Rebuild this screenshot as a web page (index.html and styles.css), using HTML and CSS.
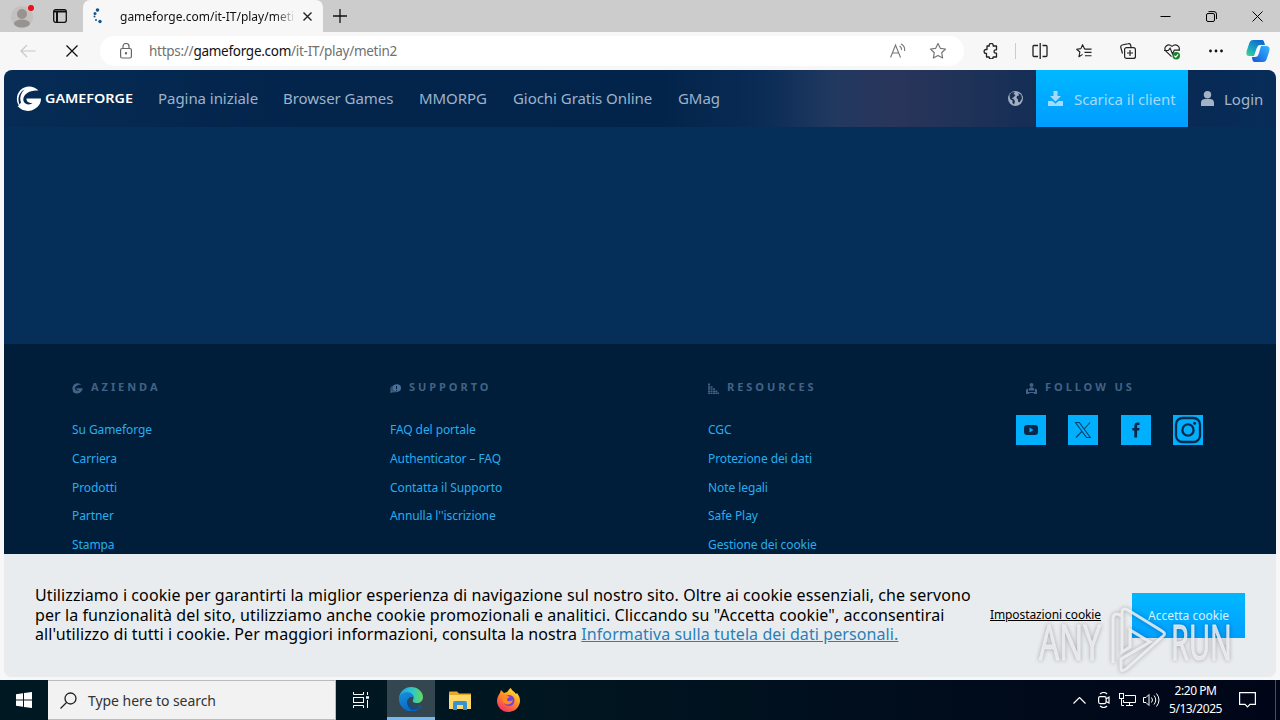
FILE: index.html
```html
<!DOCTYPE html>
<html lang="it">

<head>
  <meta charset="UTF-8">
  <meta name="viewport" content="width=device-width, initial-scale=1.0">
  <title>gameforge.com/it-IT/play/metin2</title>
  <link rel="stylesheet" href="styles.css">
</head>

<body>
  <div class="tab-strip">
    <svg class="profile" width="24" height="26" viewBox="0 0 24 26">
      <circle cx="11" cy="14" r="11" fill="#c3c0be"/>
      <circle cx="11" cy="11" r="5" fill="#969390"/>
      <ellipse cx="11" cy="20.500" rx="8" ry="4" fill="#969390"/>
      <circle cx="20" cy="5" r="3" fill="#e8121d"/>
    </svg>
    <svg class="tab-actions" width="14" height="14" viewBox="0 0 14 14" fill="none" stroke="#111" stroke-width="1.300">
      <rect x=".7" y=".7" width="12.600" height="12.600" rx="2"/>
      <path d="M1 2.500h12M4 3v10" stroke-width="2"/>
    </svg>
    <div class="tab">
      <svg width="14" height="18" viewBox="0 0 14 18" fill="#14558c">
        <circle cx="5.500" cy="3" r="1.800"/><circle cx="3" cy="6.500" r="1.500"/><circle cx="2.500" cy="9.500" r="1"/>
        <circle cx="4" cy="13" r="1"/><circle cx="8" cy="14.500" r="1.700"/>
      </svg>
      <span class="tab-title">gameforge.com/it-IT/play/metin2</span>
      <svg class="tab-close" width="9" height="9" viewBox="0 0 9 9" stroke="#222" stroke-width="1.400"><path d="M.5.5l8 8M8.500.5l-8 8"/></svg>
    </div>
    <svg class="new-tab" width="14" height="14" viewBox="0 0 14 14" stroke="#111" stroke-width="1.300"><path d="M7 0v14M0 7h14"/></svg>
    <div class="window-buttons">
      <svg width="11" height="11" viewBox="0 0 11 11" stroke="#000"><path d="M.5 5.500h10"/></svg>
      <svg width="11" height="11" viewBox="0 0 11 11" fill="none" stroke="#000"><rect x=".5" y="2.500" width="8" height="8" rx="1.500"/><path d="M2.500.6h5.500a2.500 2.500 0 0 1 2.500 2.500v5"/></svg>
      <svg width="11" height="11" viewBox="0 0 11 11" stroke="#000"><path d="M.5.5l10 10M10.500.5l-10 10"/></svg>
    </div>
  </div>

  <div class="toolbar">
    <svg class="back" width="16" height="14" viewBox="0 0 16 14" fill="none" stroke="#c8c8c8" stroke-width="1.200"><path d="M15.500 7H1M7 1L1 7l6 6"/></svg>
    <svg class="stop" width="12" height="12" viewBox="0 0 12 12" stroke="#111" stroke-width="1.300"><path d="M.5.5l11 11M11.500.5l-11 11"/></svg>
    <div class="address">
      <svg width="12" height="16" viewBox="0 0 12 16" fill="none" stroke="#666" stroke-width="1.200">
        <rect x=".6" y="5.500" width="10.800" height="9.500" rx="1.500"/><path d="M3 5.500V3.500a3 3 0 0 1 6 0v2"/><circle cx="6" cy="10.300" r=".6" fill="#666"/>
      </svg>
      <p class="url">https://<b>gameforge.com</b>/it-IT/play/metin2</p>
      <svg class="read-aloud" width="16" height="16" viewBox="0 0 16 16" fill="none" stroke="#777" stroke-width="1.100"><path d="M.6 14.500L5.500 2l5 12.500M2.300 10h6.500M9.500 3a4 4 0 0 1 2 4M11 1a6.500 6.500 0 0 1 3.500 7"/></svg>
      <svg class="favorite" width="18" height="18" viewBox="0 0 18 18" fill="none" stroke="#777" stroke-width="1.200" stroke-linejoin="round"><path d="M9 1.500l2.300 4.800 5.200.7-3.800 3.700.9 5.300L9 13.500 4.400 16l.9-5.300L1.500 7l5.200-.7z"/></svg>
    </div>
    <div class="tools">
      <svg width="16" height="16" viewBox="0 0 16 16" fill="none" stroke="#222" stroke-width="1.300" stroke-linejoin="round"><path d="M4 3h2.300a2 2 0 1 1 3.800 0h3.400v3.800h-.8a1.700 1.700 0 0 0 0 3.400h.8V14h-3.300a2 2 0 0 1-4 0H3.500v-3.700H3a1.900 1.900 0 0 1 0-3.800h1z"/></svg>
      <i class="divider"></i>
      <svg width="16" height="16" viewBox="0 0 16 16" fill="none" stroke="#222" stroke-width="1.300"><path d="M6 2.500H2a1 1 0 0 0-1 1v9a1 1 0 0 0 1 1h4M8.200 0v16M10.500 2.500H14a1 1 0 0 1 1 1v9a1 1 0 0 1-1 1h-3.500"/></svg>
      <svg width="16" height="16" viewBox="0 0 17 16" fill="none" stroke="#222" stroke-width="1.200" stroke-linejoin="round"><path d="M9.500 5.500H9L7 1.300 5.200 5.500l-4.500.6 3.400 3-1 5L7 11.600M9 6h7.500M9 9.500h7.500M9.500 13h7"/></svg>
      <svg width="16" height="16" viewBox="0 0 16 16" fill="none" stroke="#222" stroke-width="1.200"><path d="M2.500 10.500L.8 4.500A2 2 0 0 1 2.200 2l6-1.300A2 2 0 0 1 10.600 2l.5 2"/><rect x="4.600" y="4.600" width="10.800" height="10.800" rx="2"/><path d="M10 7v6M7 10h6"/></svg>
      <svg width="16" height="17" viewBox="0 0 17 17" fill="none" stroke="#222" stroke-width="1.200"><path d="M8 14L2 8C-1 4.500 4-1 8.500 3 13-1 18 4 15.500 7.500M0 7.500h4.500L6.500 5 9 11l2-4h6"/><circle cx="13" cy="13" r="4" fill="#16832a" stroke="none"/><path d="M11 13l1.500 1.500 2.500-3" stroke="#fff"/></svg>
      <svg class="more" width="14" height="4" viewBox="0 0 14 4" fill="#111"><circle cx="1.500" cy="2" r="1.400"/><circle cx="7" cy="2" r="1.400"/><circle cx="12.500" cy="2" r="1.400"/></svg>
      <svg class="copilot" width="24" height="24" viewBox="0 0 24 24">
        <defs>
          <linearGradient id="cop1" x1="0" y1="1" x2=".7" y2="0"><stop offset="0" stop-color="#45d887"/><stop offset=".5" stop-color="#159fc8"/><stop offset="1" stop-color="#1267ca"/></linearGradient>
          <linearGradient id="cop2" x1="1" y1="0" x2="0" y2="1"><stop offset="0" stop-color="#36b6ff"/><stop offset=".5" stop-color="#2489ee"/><stop offset="1" stop-color="#1454d4"/></linearGradient>
        </defs>
        <path d="M7 1h9c2 0 2 2 3 5h-5c-2 0-3 2-4 5l-2 6H3c-3 0-3-3-2-6l2-6c1-3 2-4 4-4z" fill="url(#cop1)"/>
        <path d="M17 23H9c-2 0-3-2-3-5h3c2 0 3-1 4-4l2-7h5c4 0 4 3 3 6l-2 6c-1 3-2 4-4 4z" fill="url(#cop2)"/>
      </svg>
    </div>
  </div>

  <div class="page">
    <header class="site-header">
      <a class="logo" href="#">
        <svg width="118" height="26" viewBox="0 0 118 26">
          <path d="M22.500 4.500C17-1 9-.5 4.500 4 .5 8-.5 15 3 19.500l-1.500.5c4 5 12 6.500 17 3 4.500-2.500 6.500-6 6.500-10.500H10.500c0 3 1.500 4.500 6 4.500-2.500 2.500-8 1.500-9-2C6 9 13 3.500 22.500 4.500z" fill="#fff"/>
          <path d="M3.500 18.500C1 12 3.500 6 8.500 3.500 4.500 7.500 3.500 12 5 16.500z" fill="#062a52"/>
          <text x="29" y="17" textLength="88" lengthAdjust="spacingAndGlyphs">GAMEFORGE</text>
        </svg>
      </a>
      <nav>
        <a href="#" class="n1">Pagina iniziale</a>
        <a href="#" class="n2">Browser Games</a>
        <a href="#" class="n3">MMORPG</a>
        <a href="#" class="n4">Giochi Gratis Online</a>
        <a href="#" class="n5">GMag</a>
      </nav>
      <svg class="globe" width="15" height="15" viewBox="0 0 15 15"><circle cx="7.500" cy="7.500" r="7.500" fill="#a1aec0"/><path d="M1.500 4l2-2.500L7 1 5.500 3l2 1-2 2.500-2 .5 2.500 1.500 1 2L6 13.500 4.500 12V9.500L2 8zM10 2l3.300 2 .7 3.500-2.500 4-1.500-1V8.500L8.500 7 9 5l2-.5z" fill="#1a3156"/></svg>
      <a class="download" href="#">
        <svg width="15" height="15" viewBox="0 0 15 15" fill="#a6d9fa"><path d="M5.500 0h4v5H13L7.500 10.500 2 5h3.500z"/><path d="M0 10h4.500l3 2.800 3-2.800H15v5H0z"/></svg>
        <span>Scarica il client</span>
      </a>
      <a class="login" href="#">
        <svg width="13" height="15" viewBox="0 0 13 15" fill="#a5b1c5"><circle cx="6.500" cy="3.700" r="3.700"/><path d="M0 15v-3.500C0 9 2 8 4 8h5c2 0 4 1 4 3.500V15z"/></svg>
        <span>Login</span>
      </a>
    </header>

    <main></main>

    <footer>
      <section>
        <h3><svg width="11" height="11" viewBox="0 0 26 26" fill="#426385"><path d="M22.500 4.500C17-1 9-.5 4.500 4 .5 8-.5 15 3 19.500l-1.500.5c4 5 12 6.500 17 3 4.500-2.500 6.500-6 6.500-10.500H10.500c0 3 1.500 4.500 6 4.500-2.500 2.500-8 1.500-9-2C6 9 13 3.500 22.500 4.500z"/></svg>AZIENDA</h3>
        <ul>
          <li><a href="#">Su Gameforge</a></li>
          <li><a href="#">Carriera</a></li>
          <li><a href="#">Prodotti</a></li>
          <li><a href="#">Partner</a></li>
          <li><a href="#">Stampa</a></li>
        </ul>
      </section>
      <section>
        <h3><svg width="11" height="11" viewBox="0 0 11 11"><ellipse cx="4.500" cy="6" rx="4.500" ry="3.500" fill="#294c70"/><path d="M0 10l1-3 3 2z" fill="#426385"/><ellipse cx="6.800" cy="5" rx="4.200" ry="3.800" fill="#47709a"/><path d="M6.500 3v3M6.500 7v1" stroke="#001d39"/></svg>SUPPORTO</h3>
        <ul>
          <li><a href="#">FAQ del portale</a></li>
          <li><a href="#">Authenticator – FAQ</a></li>
          <li><a href="#">Contatta il Supporto</a></li>
          <li><a href="#">Annulla l''iscrizione</a></li>
        </ul>
      </section>
      <section>
        <h3><svg width="11" height="11" viewBox="0 0 11 11" stroke="#426385" stroke-width="2" stroke-dasharray="1.500 .6"><path d="M1 11V0M3.500 11V3M6 11V5M8.300 11V7M10.300 11V9"/></svg>RESOURCES</h3>
        <ul>
          <li><a href="#">CGC</a></li>
          <li><a href="#">Protezione dei dati</a></li>
          <li><a href="#">Note legali</a></li>
          <li><a href="#">Safe Play</a></li>
          <li><a href="#">Gestione dei cookie</a></li>
        </ul>
      </section>
      <section>
        <h3><svg width="11" height="11" viewBox="0 0 11 11" fill="#426385"><circle cx="5.500" cy="2" r="2"/><path d="M2.500 7.500c0-4.500 6-4.500 6 0z"/><path d="M0 11V6.500l2-1V9h7V5.500l2 1V11H8.500l-1-1h-4l-1 1z"/></svg>FOLLOW US</h3>
        <div class="social">
          <a href="#"><svg width="30" height="30" viewBox="0 0 30 30"><rect x="8" y="10" width="14" height="10" rx="3" fill="#06294a"/><path d="M13.500 12.500v5l4-2.500z" fill="#00b0ff"/></svg></a>
          <a href="#"><svg width="30" height="30" viewBox="0 0 30 30" fill="none" stroke="#06406c" stroke-width="1.100"><path d="M7.500 7.500h3.800l11 15h-3.800zM22 7.500l-6.300 7M13.800 16.500L8 22.500"/></svg></a>
          <a href="#"><svg width="30" height="30" viewBox="0 0 30 30"><path d="M13.300 22.500v-7h-2V13h2v-2c0-2.500 1.500-3.500 3.500-3.500h1.700V10h-1.200c-1 0-1.200.5-1.200 1.300V13h2.400l-.3 2.500h-2.100v7z" fill="#06294a"/></svg></a>
          <a href="#"><svg width="30" height="30" viewBox="0 0 30 30" fill="none" stroke="#06294a" stroke-width="2.300"><rect x="3" y="3" width="24" height="24" rx="6.500"/><circle cx="15" cy="15" r="5.600"/><circle cx="21.600" cy="8.200" r="1.500" fill="#06294a" stroke="none"/></svg></a>
        </div>
      </section>
    </footer>

    <div class="cookie-bar">
      <p>Utilizziamo i cookie per garantirti la miglior esperienza di navigazione sul nostro sito. Oltre ai cookie essenziali, che servono<br>per la funzionalità del sito, utilizziamo anche cookie promozionali e analitici. Cliccando su "Accetta cookie", acconsentirai<br>all'utilizzo di tutti i cookie. Per maggiori informazioni, consulta la nostra <a href="#">Informativa sulla tutela dei dati personali.</a></p>
      <a class="cookie-settings" href="#">Impostazioni cookie</a>
      <button class="cookie-accept">Accetta cookie</button>
    </div>
  </div>

  <div class="taskbar">
    <svg class="start" width="16" height="16" viewBox="0 0 16 16" fill="#fff"><path d="M0 2.200L7 1.200v6.300H0zM8 1l8-1v7.500H8zM0 8.500h7v6.300l-7-1zM8 8.500h8V16l-8-1.100z"/></svg>
    <div class="search">
      <svg width="17" height="17" viewBox="0 0 17 17" fill="none" stroke="#222" stroke-width="1.300"><circle cx="10.500" cy="6.500" r="5.500"/><path d="M6.500 10.500L.5 16.500"/></svg>
      <span>Type here to search</span>
    </div>
    <div class="task"><svg width="17" height="16" viewBox="0 0 17 16" fill="none" stroke="#fff"><path d="M1.500 0v2.500h10V0M1.500 16v-2.500h10V16M15.500 0v3M15.500 8v8"/><rect x="1.500" y="5.500" width="10" height="5"/><path d="M14 5.500h3" stroke-width="2.500"/></svg></div>
    <div class="task active">
      <svg width="24" height="24" viewBox="0 0 24 24">
        <defs>
          <linearGradient id="edge1" x1="0" x2="1"><stop offset="0" stop-color="#1a9fe0"/><stop offset=".55" stop-color="#31c5cc"/><stop offset="1" stop-color="#65d956"/></linearGradient>
          <linearGradient id="edge2" x1="0" y1="0" x2=".5" y2="1"><stop offset="0" stop-color="#1791dd"/><stop offset="1" stop-color="#0a66bc"/></linearGradient>
        </defs>
        <path d="M0 11C1 4 6 0 12 0c7 0 12 5 12 10 0 4-3 6-6 6-3 0-5-1-4-3 1-1 1-4-3-5-4-1-9 0-11 3z" fill="url(#edge1)"/>
        <path d="M0 12c0-4 4-7 8-7 4 0 7 3 7 6-4-3-7 1-6 4 1 5 7 7 12 4 1-1 2 0 1 1-3 4-8 5-13 4C4 22 0 18 0 12z" fill="url(#edge2)"/>
        <path d="M9 12c-2 3-1 8 4 11 4 0 7-1 9-4-5 3-13 1-13-7z" fill="#0c4b94"/>
      </svg>
    </div>
    <div class="task"><svg width="22" height="19" viewBox="0 0 22 19"><path d="M0 1.500Q0 .5 1 .5h7l2 2h12V18H0z" fill="#e9a825"/><path d="M0 4h22v14H0z" fill="#fed967"/><path d="M4 19v-7q0-2 2-2h10q2 0 2 2v7h-4v-5H8v5z" fill="#3a91d0"/></svg></div>
    <div class="task">
      <svg width="24" height="24" viewBox="0 0 24 24">
        <defs><linearGradient id="ff" x1=".8" y1="0" x2=".2" y2="1"><stop offset="0" stop-color="#fff044"/><stop offset=".4" stop-color="#ff9a1f"/><stop offset="1" stop-color="#f6286a"/></linearGradient></defs>
        <path d="M3 5l1-3 3 3 3-1c1-1 2-3 4-4 0 2 3 3 5 6l1-1c3 4 4 8 2 12-2 5-7 7-11 7C5 24 0 19 0 13c0-3 1-5 3-8z" fill="url(#ff)"/>
        <circle cx="12" cy="12.500" r="5.500" fill="#7442d8"/>
        <path d="M5 8c4-1 6 0 8 1-2 1-3 1-3 3 1 2 4 1 6 0-1 5-7 6-10 2z" fill="#ff8a22"/>
      </svg>
    </div>
    <div class="tray">
      <svg class="chevron" width="13" height="7" viewBox="0 0 13 7" fill="none" stroke="#fff" stroke-width="1.200"><path d="M.5 6.500l6-6 6 6"/></svg>
      <svg class="meet" width="12" height="16" viewBox="0 0 12 16" fill="none" stroke="#fff" stroke-width="1.200"><rect x=".6" y="4.600" width="7.500" height="7" rx="1.500"/><path d="M8 7l3-2v6L8 9.500M2 2q4-3 7 0M2 14q4 3 7 0"/></svg>
      <svg width="17" height="14" viewBox="0 0 17 14" fill="none" stroke="#fff"><path d="M6 2.500h10.500v7h-12V7M10.500 9.500v3M7 12.500h7M2.500 6v6.500H5"/><rect x=".5" y=".5" width="4" height="5"/></svg>
      <svg class="volume" width="17" height="14" viewBox="0 0 17 14" fill="none" stroke="#fff"><path d="M.5 4.500H3L6 1.500v11L3 9.500H.5zM8.500 4.500q2 2.500 0 5M11 2.500q3.500 4.500 0 9M13.500.5q5 6.500 0 13"/></svg>
      <div class="clock"><span>2:20 PM</span><span>5/13/2025</span></div>
      <svg class="notify" width="17" height="16" viewBox="0 0 17 16" fill="none" stroke="#fff" stroke-width="1.200"><path d="M.6.6h15.800v11.800H11L8.500 15 6 12.400H.6z"/></svg>
      <i class="show-desktop"></i>
    </div>
  </div>

  <svg class="watermark" width="206" height="74" viewBox="0 0 206 74">
    <g class="mark-text">
      <text x="5" y="53.500" textLength="62" lengthAdjust="spacingAndGlyphs">ANY</text>
      <text x="137" y="53.500" textLength="61" lengthAdjust="spacingAndGlyphs">RUN</text>
    </g>
    <path d="M79 57V13q0-5 4-5t4 3M88 7q0-6 6-3l34 21q5 3 0 6L92 63q-5 3-5 0V53l29-17-20-12v17l-8 5z" class="mark-line"/>
  </svg>
</body>

</html>
```
FILE: styles.css
```css
/* Basic Reset */
* {
  margin: 0;
  padding: 0;
  box-sizing: border-box;
}

body {
  width: 1280px;
  height: 720px;
  overflow: hidden;
  display: flex;
  flex-direction: column;
  font-family: 'Noto Sans', sans-serif;
  background-color: #f7f7f7;
}

a {
  text-decoration: none;
}

svg {
  display: block;
  flex: none;
}

/* Browser tabs */
.tab-strip {
  height: 32px;
  background-color: #ccc;
  display: flex;
  align-items: center;
}

.profile {
  margin: 0 18px 0 11px;
}

.tab {
  margin-left: 16px;
  width: 240px;
  height: 32px;
  background-color: #f7f7f7;
  border-radius: 7px 7px 0 0;
  display: flex;
  align-items: center;
  padding-left: 9px;
}

.tab-title {
  width: 174px;
  margin-left: 14px;
  overflow: hidden;
  white-space: nowrap;
  font-size: 12px;
  color: #111;
  -webkit-mask-image: linear-gradient(to right, #000 155px, transparent 176px);
  mask-image: linear-gradient(to right, #000 155px, transparent 176px);
}

.tab-close {
  margin-left: 9px;
}

.new-tab {
  margin-left: 10px;
}

.window-buttons {
  margin-left: auto;
  padding-right: 17px;
  display: flex;
  gap: 35px;
}

/* Address row */
.toolbar {
  height: 38px;
  display: flex;
  align-items: center;
}

.back {
  margin-left: 20px;
}

.stop {
  margin-left: 30px;
}

.address {
  width: 864px;
  height: 30px;
  margin-left: 22px;
  padding: 0 17px 0 20px;
  border-radius: 15px;
  background-color: #fff;
  display: flex;
  align-items: center;
}

.url {
  margin-left: 17px;
  font-size: 13.5px;
  color: #707070;
  letter-spacing: -0.27px;
}

.url b {
  font-weight: 400;
  color: #111;
}

.read-aloud {
  margin-left: auto;
}

.favorite {
  margin-left: 23px;
}

.tools {
  flex: 1;
  padding-left: 19px;
  display: flex;
  align-items: center;
  gap: 28px;
}

.divider {
  width: 1px;
  height: 16px;
  margin: 0 -12px;
  background-color: #ccc;
}

.more {
  margin-left: 1px;
}

.copilot {
  margin-left: -5px;
}

/* Website */
.page {
  height: 607px;
  margin: 0 4px 3px;
  border-radius: 8px;
  overflow: hidden;
  background-color: #e9ecef;
  display: flex;
  flex-direction: column;
}

.site-header {
  height: 57px;
  flex: none;
  display: flex;
  align-items: center;
  background: linear-gradient(90deg, #062c55 0, #03244b 300px, #03244a 660px, #0a2c55 760px, #213960 830px, #2a355b 890px, #1c3157 980px, #142e56 1030px, #082a55 1190px, #062d58 100%);
}

.logo {
  margin-left: 12px;
}

.logo text {
  font: 600 12.5px 'Noto Sans', sans-serif;
  fill: #fff;
}

nav {
  display: flex;
  margin: -2px 0 0 24px;
}

nav a,
.download,
.login {
  font-size: 15px;
  color: #a3b6cc;
  white-space: nowrap;
}

nav a {
  color: #9eb3cb;
  letter-spacing: -0.05px;
}

.n1 { width: 125px; }
.n2 { width: 136px; }
.n3 { width: 94px; }
.n4 { width: 165px; }

.globe {
  margin-left: auto;
}

.download {
  width: 152px;
  height: 57px;
  margin-left: 13px;
  padding-left: 12px;
  display: flex;
  align-items: center;
  gap: 11px;
  color: #a6d9fa;
  letter-spacing: -0.1px;
  background: linear-gradient(#00b8ff, #009dff);
}

.login {
  width: 88px;
  padding-left: 13px;
  display: flex;
  align-items: center;
  gap: 10px;
}

main {
  height: 217px;
  flex: none;
  background: #052e58;
}

/* Footer columns */
footer {
  height: 210px;
  flex: none;
  padding: 33px 0 0 68px;
  display: grid;
  grid-template-columns: repeat(4, 318px);
  overflow: hidden;
  background-color: #001d39;
}

footer h3 {
  height: 18px;
  display: flex;
  align-items: center;
  gap: 8px;
  font-size: 11px;
  letter-spacing: 2.95px;
  color: #426385;
}

footer h3 svg {
  margin-top: 4px;
}

footer ul {
  list-style: none;
  margin-top: 21px;
}

footer li {
  height: 28.8px;
  line-height: 28.8px;
  font-size: 12px;
  letter-spacing: -0.08px;
}

footer li a {
  color: #26aeed;
}

.social {
  display: flex;
  gap: 22.4px;
  margin: 20px 0 0 -10px;
}

.social a {
  background-color: #00b0ff;
}

/* Cookie banner */
.cookie-bar {
  height: 123px;
  flex: none;
  padding-left: 31px;
  display: flex;
  align-items: center;
  background-color: #e9ecef;
}

.cookie-bar p {
  width: 955px;
  font-size: 16px;
  line-height: 19.5px;
  letter-spacing: 0.09px;
  white-space: nowrap;
  color: #000;
}

.cookie-bar p a {
  color: #2a7fb8;
  text-decoration: underline;
}

.cookie-settings {
  width: 142px;
  margin-top: -2px;
  font-size: 12px;
  letter-spacing: -0.1px;
  color: #000;
  text-decoration: underline;
  white-space: nowrap;
}

.cookie-accept {
  width: 113px;
  height: 45px;
  padding-bottom: 1px;
  border: none;
  font-family: inherit;
  font-size: 12px;
  color: #d8f1ff;
  background: linear-gradient(#00b8ff, #009fff);
}

/* Taskbar */
.taskbar {
  height: 40px;
  flex: none;
  display: flex;
  align-items: center;
  color: #fff;
  background: linear-gradient(90deg, #001821 0, #001721 500px, #000b1c 1000px, #000617 100%);
}

.start {
  margin: 0 16px;
}

.search {
  width: 288px;
  height: 40px;
  margin-right: 1px;
  padding-left: 12px;
  display: flex;
  align-items: center;
  gap: 11px;
  border: 1px solid #bbb;
  border-left: none;
  background-color: #f2f2f2;
  font-size: 14px;
  letter-spacing: -0.05px;
  color: #333;
}

.task {
  width: 49px;
  height: 40px;
  display: flex;
  align-items: center;
  justify-content: center;
}

.task:nth-of-type(2) {
  padding-right: 2px;
}

.task.active {
  width: 48px;
  margin-left: 1px;
  background-color: #34464f;
  border-bottom: 3px solid #76b9ed;
}

.tray {
  height: 40px;
  margin-left: auto;
  display: flex;
  align-items: center;
  gap: 10px;
}

.meet {
  margin: 0 -1px 0 2px;
}

.volume {
  margin-left: -3px;
}

.clock {
  width: 53px;
  margin: 0 7px 0 -1px;
  display: flex;
  flex-direction: column;
  align-items: center;
  font-size: 12px;
  line-height: 18px;
  letter-spacing: -0.45px;
}

.show-desktop {
  width: 5px;
  height: 40px;
  margin-left: 9px;
  border-left: 1px solid #4a4f5c;
}

/* Watermark over the page corner */
.watermark {
  position: absolute;
  left: 1034px;
  top: 606px;
  filter: drop-shadow(0 0 2px rgba(0, 0, 0, 0.35));
}

.mark-text text {
  font: 49px 'Open Sans', sans-serif;
  fill: rgba(238, 239, 241, 0.85);
  stroke: rgba(238, 239, 241, 0.85);
}

.mark-line {
  fill: none;
  stroke: rgba(240, 241, 243, 0.85);
  stroke-width: 3;
}
```
